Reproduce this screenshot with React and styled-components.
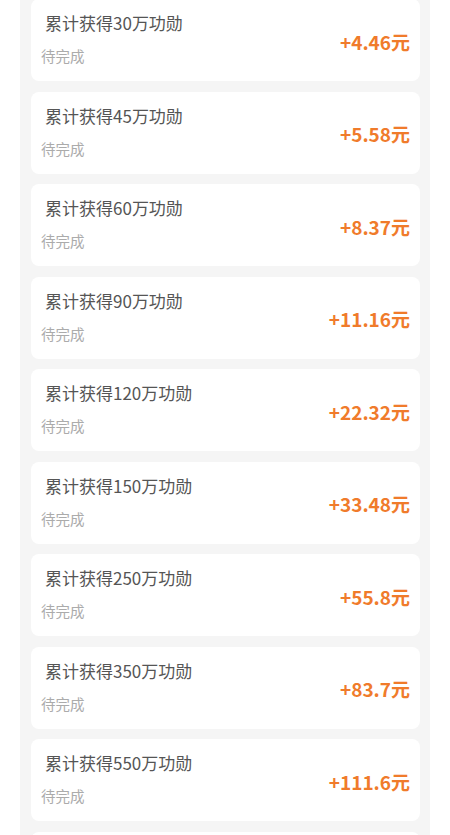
import React from "react";
import styled, { createGlobalStyle } from "styled-components";

const GlobalStyle = createGlobalStyle`
  body {
    margin: 0;
    background: #ffffff;
    font-family: "Noto Sans CJK SC", "Noto Sans", sans-serif;
  }
`;

const Panel = styled.div`
  margin: 0 20px;
  padding: 0 10px 0 11px;
  background: #f5f5f5;
  height: 835px;
  overflow: hidden;
`;

const List = styled.div`
  display: flex;
  flex-direction: column;
  gap: 10.5px;
  margin-top: -1px;
`;

const Card = styled.div`
  flex: 0 0 82px;
  display: flex;
  align-items: center;
  justify-content: space-between;
  background: #ffffff;
  border-radius: 8px;
  padding: 0 10px;
`;

const Info = styled.div`
  display: flex;
  flex-direction: column;
  gap: 12px;
  margin-top: -2px;
`;

const Title = styled.div`
  padding-left: 4px;
  font-size: 17px;
  line-height: 22px;
  color: #555555;
`;

const Status = styled.div`
  font-size: 14.5px;
  line-height: 20px;
  color: #ababab;
`;

const Amount = styled.div`
  font-size: 19px;
  font-weight: 700;
  color: #f07b2b;
  margin-top: 2px;
`;

const tasks = [
  { goal: 30, reward: "4.46" },
  { goal: 45, reward: "5.58" },
  { goal: 60, reward: "8.37" },
  { goal: 90, reward: "11.16" },
  { goal: 120, reward: "22.32" },
  { goal: 150, reward: "33.48" },
  { goal: 250, reward: "55.8" },
  { goal: 350, reward: "83.7" },
  { goal: 550, reward: "111.6" },
  { goal: 750, reward: "150" },
];

export default function App() {
  return (
    <>
      <GlobalStyle />
      <Panel>
        <List>
          {tasks.map((t) => (
            <Card key={t.goal}>
              <Info>
                <Title>累计获得{t.goal}万功勋</Title>
                <Status>待完成</Status>
              </Info>
              <Amount>+{t.reward}元</Amount>
            </Card>
          ))}
        </List>
      </Panel>
    </>
  );
}
